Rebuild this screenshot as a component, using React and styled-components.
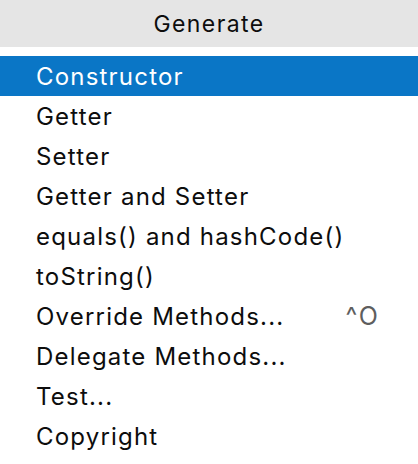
import React from "react";
import styled, { createGlobalStyle } from "styled-components";

const GlobalStyle = createGlobalStyle`
  body {
    margin: 0;
    background: #ffffff;
    font-family: Inter, "Liberation Sans", sans-serif;
  }
`;

const Menu = styled.div`
  width: 418px;
  height: 464px;
  background: #ffffff;
  display: flex;
  flex-direction: column;
  overflow: hidden;
`;

const Header = styled.div`
  height: 47px;
  background: #e5e5e5;
  display: flex;
  align-items: center;
  justify-content: center;
  font-size: 23px;
  color: #0d0d0d;
  letter-spacing: 1.4px;
`;

const List = styled.ul`
  list-style: none;
  margin: 0;
  padding: 9px 0 0;
`;

const Item = styled.li`
  height: 40px;
  display: flex;
  align-items: center;
  justify-content: space-between;
  padding: 0 38px 0 36px;
  font-size: 24px;
  letter-spacing: 1.2px;
  background: ${(props) => (props.selected ? "#0a76c6" : "transparent")};
  color: ${(props) => (props.selected ? "#ffffff" : "#0d0d0d")};
`;

const Shortcut = styled.span`
  color: #5e5e5e;
  font-size: 25px;
  letter-spacing: 2px;
`;

const items = [
  { label: "Constructor" },
  { label: "Getter" },
  { label: "Setter" },
  { label: "Getter and Setter" },
  { label: "equals() and hashCode()" },
  { label: "toString()" },
  { label: "Override Methods...", shortcut: "^O" },
  { label: "Delegate Methods..." },
  { label: "Test..." },
  { label: "Copyright" },
];

const App = () => {
  return (
    <>
      <GlobalStyle />
      <Menu>
        <Header>Generate</Header>
        <List>
          {items.map((item, i) => (
            <Item key={item.label} selected={i === 0}>
              <span>{item.label}</span>
              {item.shortcut && <Shortcut>{item.shortcut}</Shortcut>}
            </Item>
          ))}
        </List>
      </Menu>
    </>
  );
};

export default App;
